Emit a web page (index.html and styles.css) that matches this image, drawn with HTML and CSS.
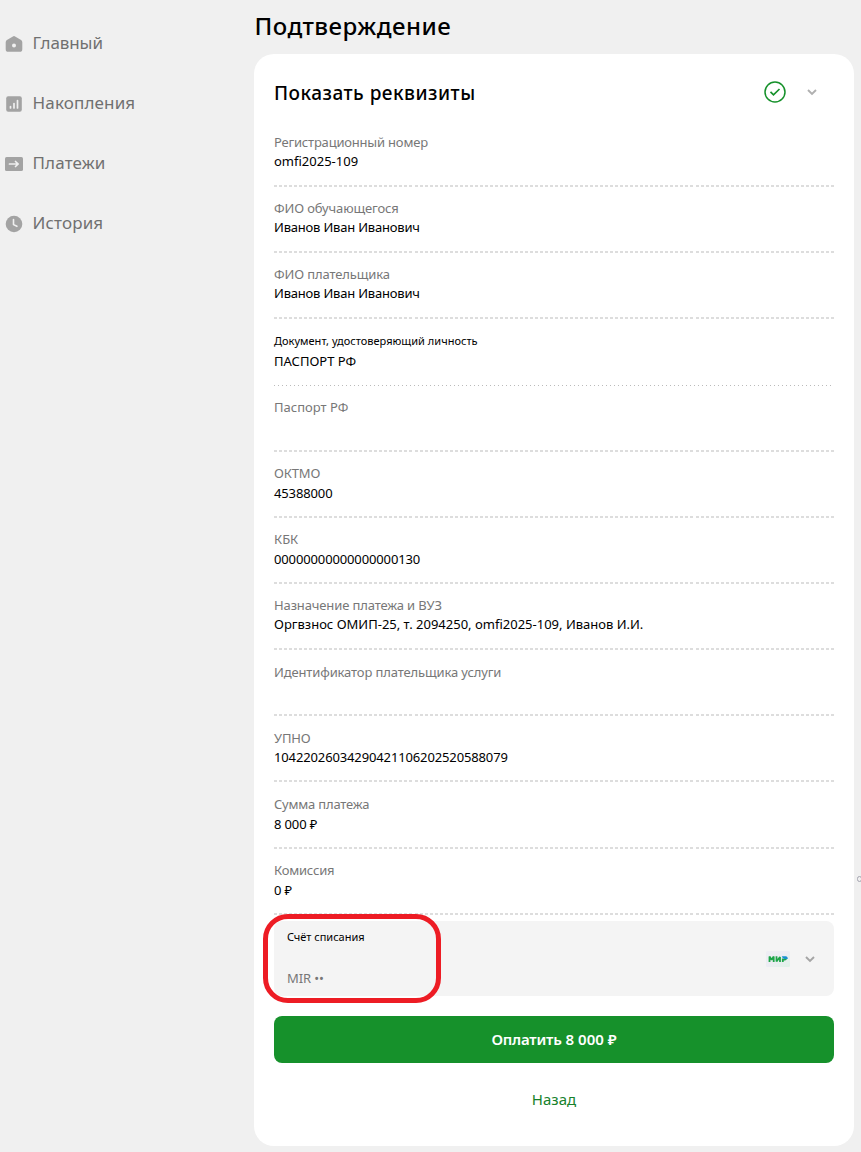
FILE: index.html
```html
<!DOCTYPE html>
<html lang="ru">
<head>
<meta charset="utf-8">
<title>Подтверждение</title>
<link rel="stylesheet" href="styles.css">
</head>
<body>
<div class="page">
  <nav class="sidebar">
    <a class="nav-item"><svg class="nav-icon" viewBox="0 0 18 18"><path fill="#a3a3a3" d="M7.9 1.400a2 2 0 0 1 2.200 0l6 3.600q1.200.8 1.200 2.200v7a2.600 2.600 0 0 1-2.600 2.600H3.300a2.600 2.600 0 0 1-2.600-2.600v-7Q.7 5.800 1.900 5z"/><circle cx="9" cy="10.500" r="2" fill="#f0f0f0"/></svg><span class="nav-home">Главный</span></a>
    <a class="nav-item"><svg class="nav-icon" viewBox="0 0 18 18"><rect x="1.200" y="1.200" width="15.600" height="15.600" rx="2" fill="#a3a3a3"/><path stroke="#f0f0f0" stroke-width="1.700" stroke-linecap="round" d="M5.500 11.500v1.500M9 8.500v4.500M12.500 5.500v7.500"/></svg><span>Накопления</span></a>
    <a class="nav-item"><svg class="nav-icon" viewBox="0 0 18 18"><rect x="0" y="2" width="18" height="14" rx="1.600" fill="#a3a3a3"/><path fill="none" stroke="#f0f0f0" stroke-width="1.700" stroke-linecap="round" stroke-linejoin="round" d="M4.500 9h8.500M10.500 6.500L13.200 9l-2.700 2.500"/></svg><span>Платежи</span></a>
    <a class="nav-item"><svg class="nav-icon" viewBox="0 0 18 18"><circle cx="9" cy="9" r="8.300" fill="#a3a3a3"/><path fill="none" stroke="#f0f0f0" stroke-width="1.600" stroke-linecap="round" stroke-linejoin="round" d="M8.500 4.500V9.600l3.400 1.700"/></svg><span>История</span></a>
  </nav>
  <main class="content">
    <h1 class="title">Подтверждение</h1>
    <section class="card">
      <header class="card-head">
        <h2 class="card-title">Показать реквизиты</h2>
        <svg class="check" viewBox="0 0 24 24"><circle cx="12" cy="12" r="10" fill="none" stroke="#16912b" stroke-width="1.500"/><path fill="none" stroke="#16912b" stroke-width="1.700" d="M7.500 11.800l3 3L16.500 9"/></svg>
        <svg class="chevron head-chevron" viewBox="0 0 12 12"><path fill="none" stroke="#b0b0b0" stroke-width="1.900" d="M2 4l4 4 4-4"/></svg>
      </header>
      <dl class="details">
        <div class="row"><dt class="snug">Регистрационный номер</dt><dd class="even">omfi2025-109</dd></div>
        <div class="row"><dt>ФИО обучающегося</dt><dd class="snug">Иванов Иван Иванович</dd></div>
        <div class="row"><dt>ФИО плательщика</dt><dd class="snug">Иванов Иван Иванович</dd></div>
        <div class="row row-document"><dt>Документ, удостоверяющий личность</dt><dd class="even">ПАСПОРТ РФ</dd></div>
        <div class="row"><dt class="even">Паспорт РФ</dt><dd></dd></div>
        <div class="row low"><dt>ОКТМО</dt><dd>45388000</dd></div>
        <div class="row low"><dt class="even">КБК</dt><dd>00000000000000000130</dd></div>
        <div class="row"><dt>Назначение платежа и ВУЗ</dt><dd class="even">Оргвзнос ОМИП-25, т. 2094250, omfi2025-109, Иванов И.И.</dd></div>
        <div class="row shifted"><dt>Идентификатор плательщика услуги</dt><dd></dd></div>
        <div class="row shifted"><dt>УПНО</dt><dd>10422026034290421106202520588079</dd></div>
        <div class="row shifted low tall"><dt class="snug">Сумма платежа</dt><dd>8 000 ₽</dd></div>
        <div class="row low"><dt class="snug">Комиссия</dt><dd>0 ₽</dd></div>
      </dl>
      <div class="account">
        <div class="account-text"><span class="account-label">Счёт списания</span><span class="account-value">MIR ••</span></div>
        <svg class="mir" viewBox="0 0 24 16"><defs><linearGradient id="mirBg" x1="0" y1="0" x2="1" y2="1"><stop offset="0" stop-color="#eeeef3"/><stop offset=".5" stop-color="#ececf3"/><stop offset="1" stop-color="#def2e7"/></linearGradient></defs><rect width="24" height="16" rx="1.500" fill="url(#mirBg)"/><path fill="none" stroke="#1da548" stroke-width="1.800" stroke-linejoin="bevel" d="M3.500 11V5.500l2.100 3.200 2.100-3.200V11M10.500 5.300v5.200l3.500-4.500v5M16.800 11V7.500"/><path fill="#1da548" d="M16 8h5q-.8 1.400-2 1.400h-3z"/><path fill="#168fce" d="M15.800 5.300h4.200q1.800 0 1.800 2.700h-3.500q-2-.7-2.500-2.700z"/></svg>
        <svg class="chevron" viewBox="0 0 12 12"><path fill="none" stroke="#a5a5a5" stroke-width="1.900" d="M2 4l4 4 4-4"/></svg>
        <div class="highlight"></div>
      </div>
      <button class="pay"><span class="pay-verb">Оплатить</span> 8 000 ₽</button>
      <a class="back">Назад</a>
    </section>
  </main>
  <span class="edge-mark"></span>
</div>
</body>
</html>
```
FILE: styles.css
```css
* { box-sizing: border-box; }
body { margin: 0; background: #f0f0f0; font-family: "Noto Sans", sans-serif; color: #000; }
.page { position: relative; display: flex; width: 861px; height: 1152px; overflow: hidden; }
.sidebar { width: 254px; padding: 12px 0 0 5px; }
.nav-item { display: flex; align-items: center; gap: 9.5px; height: 60px; color: #707070; font-size: 17px; letter-spacing: .15px; white-space: nowrap; }
.nav-home { letter-spacing: -.1px; }
.nav-icon { width: 18px; height: 18px; margin-top: 4px; }
.content { width: 600px; }
.title { margin: 0; height: 54px; padding-left: .5px; font-size: 24px; line-height: 52px; font-weight: 500; letter-spacing: .48px; white-space: nowrap; }
.card { display: flex; flex-direction: column; height: 1092px; padding: 0 20px; border-radius: 20px; background: #fff; }
.card-head { display: flex; align-items: center; height: 67px; padding: 9px 16px 0 0; }
.card-title { flex: 1; margin: 0; padding-top: 2px; font-size: 19px; line-height: 26px; font-weight: 500; letter-spacing: .5px; white-space: nowrap; }
.check { width: 24px; height: 24px; }
.chevron { width: 12px; height: 12px; }
.head-chevron { margin-left: 19px; }
.details { margin: 0; font-size: 13px; line-height: 20px; letter-spacing: -.13px; }
.row { height: 66px; padding-top: 11px; white-space: nowrap; background: repeating-linear-gradient(90deg, #ddd 0 3px, transparent 3px 5.018px) left bottom / 100% 2px no-repeat; }
.row dt { height: 19px; color: #777; }
.row dd { margin: 0; }
.row .snug { letter-spacing: -.2px; }
.row .even { letter-spacing: 0; }
.low dt { height: 20px; }
.shifted { padding-top: 12px; }
.row.tall { height: 67px; }
.row-document { height: 67px; padding-top: 12px; background: repeating-linear-gradient(90deg, #bbb 0 1px, transparent 1px 4px) left bottom / 558px 1px no-repeat; }
.row-document dt { height: 20px; color: #000; font-size: 11px; letter-spacing: .02px; }
.account { position: relative; display: flex; align-items: center; height: 75px; margin-top: 6px; padding: 0 18px 0 13px; border-radius: 8px; background: #f4f4f4; }
.account-text { flex: 1; display: flex; flex-direction: column; height: 75px; padding-top: 6px; }
.account-label { height: 41px; font-size: 11px; line-height: 20px; }
.account-value { font-size: 13px; line-height: 20px; letter-spacing: -.1px; color: #777; }
.mir { width: 24px; height: 16px; margin-right: 14px; }
.highlight { position: absolute; left: -11px; top: -7px; width: 178px; height: 89px; border: 5px solid #ed1c24; border-radius: 25px; }
.pay { height: 47px; margin: 20px 0 0; padding: 0; border: 0; border-radius: 8px; background: #16912b; color: #fff; font: 600 15px/47px "Noto Sans", sans-serif; }
.pay-verb { letter-spacing: -.2px; }
.back { align-self: center; margin-top: 25px; font-size: 15px; line-height: 22px; color: #16812b; }
.edge-mark { position: absolute; left: 857px; top: 876px; width: 5px; height: 6px; border: 1px solid #a5a5b0; border-radius: 3px; }
```
